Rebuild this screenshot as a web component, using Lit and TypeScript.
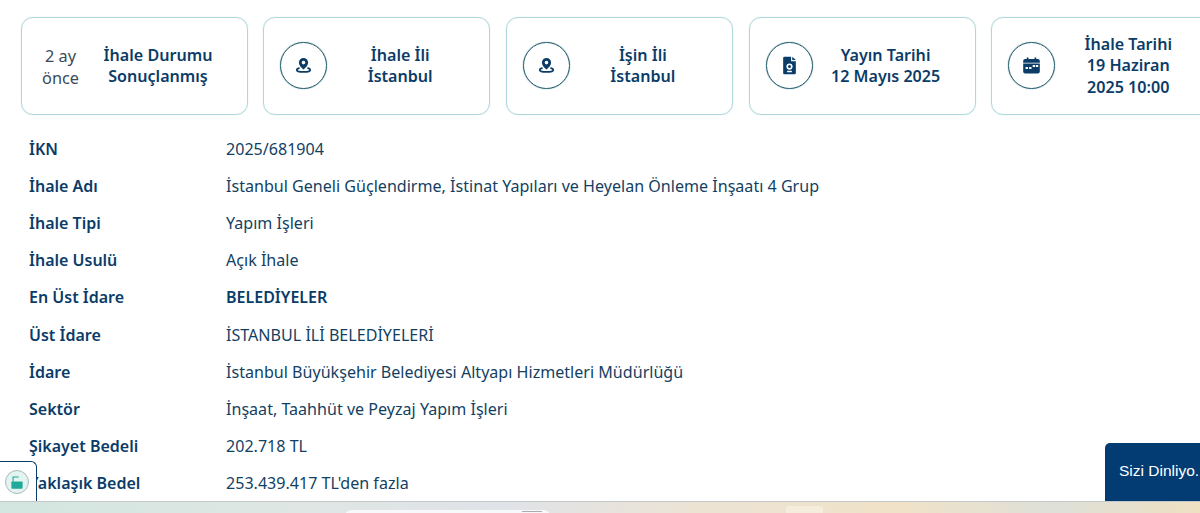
import { LitElement, html, css, svg } from 'lit';
import { customElement } from 'lit/decorators.js';

const pinIcon = svg`<path fill="#0b3c68" fill-rule="evenodd" d="M12 2.500a5.800 5.800 0 0 0-5.800 5.800c0 3.700 3.800 7.300 5.800 8.900 2-1.600 5.800-5.200 5.800-8.900A5.800 5.800 0 0 0 12 2.500zm0 3.500a2.300 2.300 0 1 1 0 4.600 2.300 2.300 0 0 1 0-4.600z"/><path fill="none" stroke="#0b3c68" stroke-width="2.300" stroke-linecap="round" d="M6.200 15.400c-1.700.5-2.700 1.200-2.700 2.200 0 1.600 3.800 2.500 8.500 2.500s8.500-.9 8.500-2.500c0-1-1-1.700-2.700-2.200"/>`;
const docIcon = svg`<path fill="#0b3c68" fill-rule="evenodd" d="M5.500 1h8.500v5.500h6V21.500a1.500 1.500 0 0 1-1.500 1.500h-13A1.500 1.500 0 0 1 4 21.500V2.500A1.500 1.500 0 0 1 5.500 1zm6.500 8.500a3.900 3.900 0 1 0 0 7.800 3.900 3.900 0 0 0 0-7.800zm0 2a1.900 1.900 0 1 1 0 3.800 1.900 1.900 0 0 1 0-3.800zM9 18.500h6v2H9z"/><path fill="#0b3c68" d="M15.500 1l4.500 4.200h-4.500z"/>`;
const calIcon = svg`<path fill="#0b3c68" fill-rule="evenodd" d="M6 2h2.200v1.800h7.600V2H18v1.800h2A2.500 2.500 0 0 1 22.500 6.300v13.200a2.500 2.500 0 0 1-2.500 2.500H4a2.500 2.500 0 0 1-2.500-2.500V6.300A2.500 2.500 0 0 1 4 3.800h2zM1.500 8.500v1h21v-1zM4.500 14v2.300h3V14zm4.500 0v2.300h3V14zm4.500-2.500v2.300h3v-2.300zm4 0v2.300h3v-2.300z"/>`;

const cards = [
  { lead: ['2 ay', 'önce'], lines: ['İhale Durumu', 'Sonuçlanmış'] },
  { icon: pinIcon, lines: ['İhale İli', 'İstanbul'] },
  { icon: pinIcon, lines: ['İşin İli', 'İstanbul'] },
  { icon: docIcon, lines: ['Yayın Tarihi', '12 Mayıs 2025'] },
  { icon: calIcon, lines: ['İhale Tarihi', '19 Haziran', '2025 10:00'] },
];

const rows = [
  ['İKN', '2025/681904'],
  ['İhale Adı', 'İstanbul Geneli Güçlendirme, İstinat Yapıları ve Heyelan Önleme İnşaatı 4 Grup'],
  ['İhale Tipi', 'Yapım İşleri'],
  ['İhale Usulü', 'Açık İhale'],
  ['En Üst İdare', 'BELEDİYELER', true],
  ['Üst İdare', 'İSTANBUL İLİ BELEDİYELERİ'],
  ['İdare', 'İstanbul Büyükşehir Belediyesi Altyapı Hizmetleri Müdürlüğü'],
  ['Sektör', 'İnşaat, Taahhüt ve Peyzaj Yapım İşleri'],
  ['Şikayet Bedeli', '202.718 TL'],
  ['Yaklaşık Bedel', "253.439.417 TL'den fazla"],
];

@customElement('app-root')
export class AppRoot extends LitElement {
  static styles = css`
    :host {
      display: flex;
      flex-direction: column;
      height: 513px;
      width: 1200px;
      overflow: hidden;
      position: relative;
      background: #fff;
      font-family: 'Noto Sans', 'Open Sans', sans-serif;
      color: #0b3c68;
    }
    .content {
      flex: 1;
      min-height: 0;
      overflow: hidden;
      padding: 16.500px 0 0 20.500px;
    }
    .cards {
      display: flex;
      gap: 15.700px;
      width: 1300px;
    }
    .card {
      box-sizing: border-box;
      flex: 0 0 227px;
      height: 98px;
      display: flex;
      align-items: center;
      padding: 0 15px 0 16px;
      border: 1px solid #aed8da;
      border-radius: 12px;
      box-shadow: 0 0 1px #aed8da;
    }
    .lead {
      flex: 0 0 50px;
      margin-left: -2px;
      text-align: center;
      font-size: 16.300px;
      line-height: 22px;
      padding-top: 2px;
      color: #3c4a57;
    }
    .circle {
      flex: 0 0 47px;
      height: 47px;
      box-sizing: border-box;
      border: 1px solid #1f5a6b;
      border-radius: 50%;
      box-shadow: 0 0 1px #1f5a6b;
      display: flex;
      align-items: center;
      justify-content: center;
    }
    .circle svg {
      width: 19px;
      height: 19px;
    }
    .title {
      flex: 1;
      text-align: center;
      font-size: 16.100px;
      font-weight: 600;
      line-height: 21.500px;
      color: #0b3c68;
      padding: 1px 1px 0 0;
    }
    .rows {
      margin: 15.500px 0 0 8.500px;
      display: grid;
      grid-template-columns: 197px 1fr;
      grid-auto-rows: 37.200px;
      align-items: center;
      font-size: 16px;
      line-height: 22px;
    }
    .label {
      font-weight: 600;
      color: #0b3c68;
    }
    .value {
      font-size: 16.080px;
      font-weight: 450;
      color: #133f63;
    }
    .value.strong {
      font-size: 16px;
      font-weight: 600;
      color: #0b3c68;
    }
    .strip {
      flex: 0 0 12px;
      position: relative;
      border-top: 1px solid #c4c8c8;
      box-sizing: border-box;
      background: linear-gradient(90deg, #d3e6e0 0%, #dfe6e4 25%, #e0e3e8 42%, #ece3d4 58%, #f0e2c8 75%, #dee0d8 88%, #efe0c2 100%);
    }
    .search {
      position: absolute;
      left: 345px;
      top: 8px;
      width: 205px;
      height: 8px;
      border-radius: 6px 6px 0 0;
      background: #f7f8f9;
    }
    .search::after {
      content: '';
      position: absolute;
      left: 177px;
      top: 1px;
      width: 20px;
      height: 1px;
      background: #a9adb2;
    }
    .tray {
      position: absolute;
      left: 786px;
      top: 4px;
      width: 37px;
      height: 12px;
      border-radius: 3px 3px 0 0;
      background: #f6ecdc;
    }
    .lock {
      position: absolute;
      left: -6px;
      top: 461px;
      width: 43px;
      height: 40px;
      box-sizing: border-box;
      display: flex;
      align-items: center;
      justify-content: center;
      padding-left: 2px;
      background: #fff;
      border: 1px solid #0b3c68;
      border-bottom: none;
      border-radius: 0 6px 0 0;
    }
    .lock span {
      width: 24px;
      height: 24px;
      box-sizing: border-box;
      border-radius: 50%;
      border: 1px solid #aab9bb;
      background: #e2f3f0;
      display: flex;
      align-items: center;
      justify-content: center;
    }
    .lock svg {
      width: 18px;
      height: 18px;
    }
    .chat {
      position: absolute;
      left: 1105px;
      top: 443px;
      width: 95px;
      height: 58px;
      box-sizing: border-box;
      padding: 0 0 2px 14px;
      display: flex;
      align-items: center;
      background: #033c73;
      border-radius: 5px 0 0 0;
      color: #fff;
      font-family: 'Liberation Sans', Arial, sans-serif;
      font-size: 15.500px;
      white-space: nowrap;
    }
  `;

  render() {
    return html`
      <div class="content">
        <div class="cards">
          ${cards.map(
            (c) => html`
              <div class="card">
                ${c.lead
                  ? html`<div class="lead">${c.lead.map((l) => html`<div>${l}</div>`)}</div>`
                  : html`<div class="circle"><svg viewBox="0 0 24 24">${c.icon}</svg></div>`}
                <div class="title">${c.lines.map((l) => html`<div>${l}</div>`)}</div>
              </div>
            `
          )}
        </div>
        <div class="rows">
          ${rows.map(
            ([label, value, strong]) => html`
              <div class="label">${label}</div>
              <div class="value ${strong ? 'strong' : ''}">${value}</div>
            `
          )}
        </div>
      </div>
      <div class="strip">
        <div class="search"></div>
        <div class="tray"></div>
      </div>
      <div class="lock">
        <span>
          <svg viewBox="0 0 16 16">
            <rect x="3" y="7.500" width="10" height="6.500" rx="0.800" fill="#1fa99a" />
            <path d="M4.500 7.500V3.500h5" fill="none" stroke="#1fa99a" stroke-width="1" />
          </svg>
        </span>
      </div>
      <div class="chat">Sizi Dinliyo.</div>
    `;
  }
}
